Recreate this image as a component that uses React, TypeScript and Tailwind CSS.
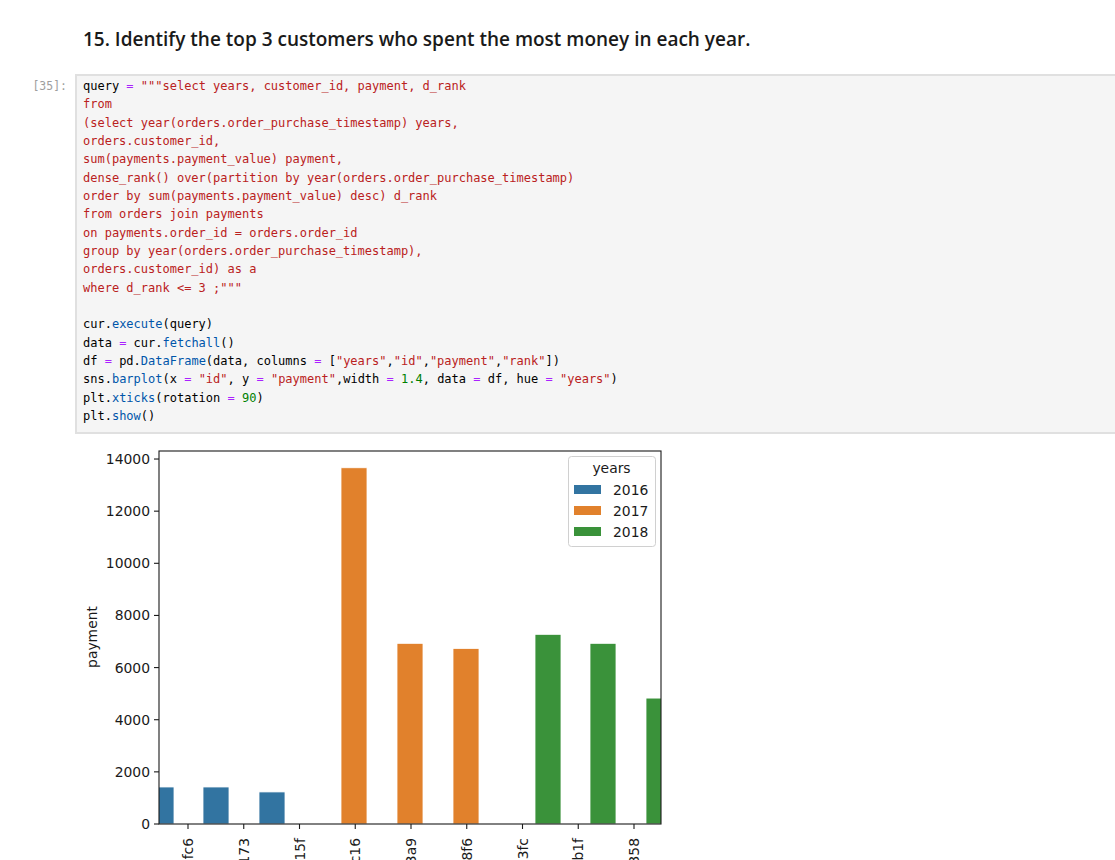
import React from "react";

type Tok = [string, string?];

const K = "text-[#aa22ff]";
const S = "text-[#ba2121]";
const P = "text-[#0055aa]";
const N = "text-[#008000]";

const sql = [
  "from",
  "(select year(orders.order_purchase_timestamp) years,",
  "orders.customer_id,",
  "sum(payments.payment_value) payment,",
  "dense_rank() over(partition by year(orders.order_purchase_timestamp)",
  "order by sum(payments.payment_value) desc) d_rank",
  "from orders join payments",
  "on payments.order_id = orders.order_id",
  "group by year(orders.order_purchase_timestamp),",
  "orders.customer_id) as a",
  'where d_rank <= 3 ;"""',
];

const lines: Tok[][] = [
  [["query "], ["=", K], [" "], ['"""select years, customer_id, payment, d_rank', S]],
  ...sql.map((s) => [[s, S]] as Tok[]),
  [[" "]],
  [["cur."], ["execute", P], ["(query)"]],
  [["data "], ["=", K], [" cur."], ["fetchall", P], ["()"]],
  [["df "], ["=", K], [" pd."], ["DataFrame", P], ["(data, columns "], ["=", K], [" ["], ['"years"', S], [","], ['"id"', S], [","], ['"payment"', S], [","], ['"rank"', S], ["])"]],
  [["sns."], ["barplot", P], ["(x "], ["=", K], [" "], ['"id"', S], [", y "], ["=", K], [" "], ['"payment"', S], [",width "], ["=", K], [" "], ["1.4", N], [", data "], ["=", K], [" df, hue "], ["=", K], [" "], ['"years"', S], [")"]],
  [["plt."], ["xticks", P], ["(rotation "], ["=", K], [" "], ["90", N], [")"]],
  [["plt."], ["show", P], ["()"]],
];

const BLUE = "#3274a1";
const ORANGE = "#e1812c";
const GREEN = "#3a923a";

// axes box, svg coords
const L = 84, R = 586, T = 11, B = 384;
const y = (v: number) => B - v * 0.02607;

const bars = [
  { x: 73, v: 1420, c: BLUE },
  { x: 128, v: 1420, c: BLUE },
  { x: 184, v: 1230, c: BLUE },
  { x: 266, v: 13665, c: ORANGE },
  { x: 322, v: 6930, c: ORANGE },
  { x: 378, v: 6735, c: ORANGE },
  { x: 460, v: 7275, c: GREEN },
  { x: 515, v: 6930, c: GREEN },
  { x: 571, v: 4830, c: GREEN },
];

const ids = [
  "a9dc96b027d1252bbac0a9b72d837fc6",
  "1d34ed25963d5aae4cf3d7f3a4cda173",
  "4a06381959b6670756de02e07b83815f",
  "1617b1357756262bfa56ab541c47bc16",
  "ec5b2ba62e574342386871631fafd3a9",
  "c6e2731c5b391845f6800c97401a48f6",
  "f48d464a0baaea338cb25f816991d3fc",
  "e0a2412720e9ea4f26c1ac985f6a7b1f",
  "3fd6777bbce08a352fddd04e4a7cc358",
];

function Chart() {
  return (
    <svg width={600} height={420} viewBox="0 0 600 420" className="font-['DejaVu_Sans',sans-serif]">
      <defs>
        <clipPath id="ax">
          <rect x={L} y={T} width={R - L} height={B - T} />
        </clipPath>
      </defs>
      <g clipPath="url(#ax)">
        {bars.map((b, i) => (
          <rect key={i} x={b.x} y={y(b.v)} width={26} height={B - y(b.v)} fill={b.c} stroke="#ffffff" strokeWidth={0.8} />
        ))}
      </g>
      <rect x={L} y={T} width={R - L} height={B - T} fill="none" stroke="#1a1a1a" strokeWidth={1.1} />
      {[0, 2000, 4000, 6000, 8000, 10000, 12000, 14000].map((v) => (
        <g key={v}>
          <line x1={L - 5} x2={L} y1={y(v)} y2={y(v)} stroke="#1a1a1a" strokeWidth={1.1} />
          <text x={L - 9} y={y(v)} textAnchor="end" dominantBaseline="central" fontSize={13.9} fill="#1a1a1a">
            {v}
          </text>
        </g>
      ))}
      <text transform="translate(17 197) rotate(-90)" textAnchor="middle" dominantBaseline="central" fontSize={13.9} fill="#1a1a1a">
        payment
      </text>
      {ids.map((id, i) => {
        const tx = 113 + i * 55.75;
        return (
          <g key={id}>
            <line x1={tx} x2={tx} y1={B} y2={B + 5} stroke="#1a1a1a" strokeWidth={1.1} />
            <text transform={`translate(${tx} ${B + 14}) rotate(-90)`} textAnchor="end" dominantBaseline="central" fontSize={13.9} fill="#1a1a1a">
              {id}
            </text>
          </g>
        );
      })}
      <rect x={493.5} y={16.5} width={87} height={90} rx={3} fill="#ffffff" fillOpacity={0.8} stroke="#d0d0d0" strokeWidth={1} />
      <text x={536.5} y={28} textAnchor="middle" dominantBaseline="central" fontSize={13.9} fill="#1a1a1a">
        years
      </text>
      {[
        ["2016", BLUE],
        ["2017", ORANGE],
        ["2018", GREEN],
      ].map(([t, c], i) => (
        <g key={t}>
          <rect x={499} y={45 + i * 21} width={27} height={9} fill={c} />
          <text x={538} y={49.5 + i * 21} dominantBaseline="central" fontSize={13.9} fill="#1a1a1a">
            {t}
          </text>
        </g>
      ))}
    </svg>
  );
}

export default function App() {
  return (
    <div className="h-[860px] w-[1115px] overflow-hidden bg-white">
      <h2 className="pl-[83px] pt-[25px] font-['Open_Sans',sans-serif] text-[19px] leading-[28px] font-semibold text-[#1a1a1a]">
        15. Identify the top 3 customers who spent the most money in each year.
      </h2>
      <div className="mt-[21px] flex">
        <div className="w-[75px] shrink-0 pt-[3px] pr-[8px] text-right font-['DejaVu_Sans_Mono',monospace] text-[11.5px] leading-[18px] text-[#9e9e9e]">[35]:</div>
        <div className="flex-1 border-2 border-r-0 border-[#e0e0e0] bg-[#f5f5f5] pt-[1px] pb-[7px] pl-[6px]">
          <pre className="font-['DejaVu_Sans_Mono',monospace] text-[12px] leading-[18.33px] text-[#000000]">
            {lines.map((ln, i) => (
              <div key={i}>
                {ln.map(([t, c], j) => (
                  <span key={j} className={c}>
                    {t}
                  </span>
                ))}
              </div>
            ))}
          </pre>
        </div>
      </div>
      <div className="pt-[6px] pl-[75px]">
        <Chart />
      </div>
    </div>
  );
}
